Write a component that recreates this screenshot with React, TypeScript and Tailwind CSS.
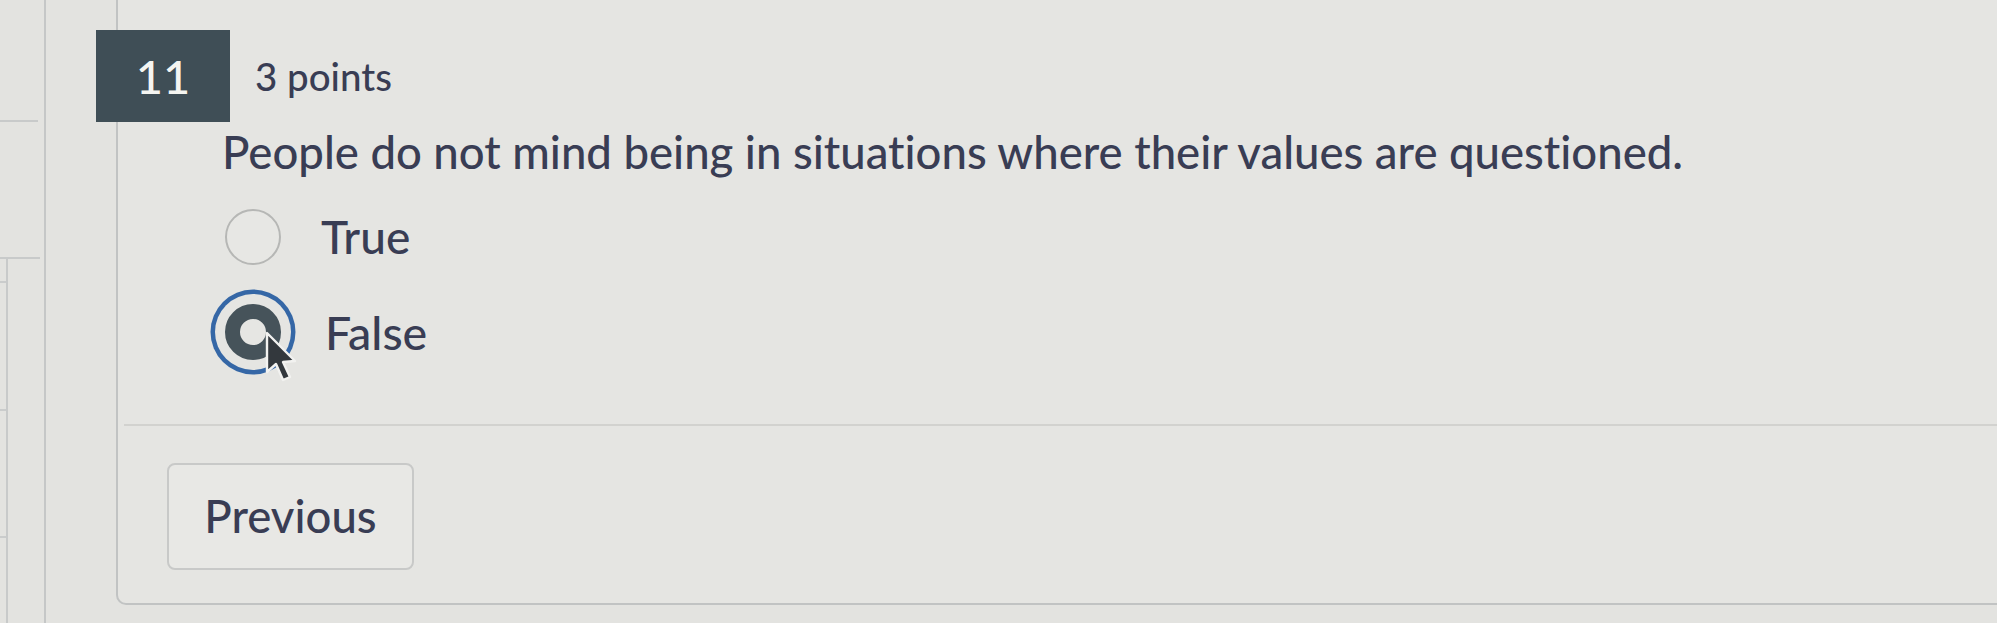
function Radio({ checked }: { checked?: boolean }) {
  if (checked) {
    return (
      <div className="relative w-[56px] h-[56px] shrink-0">
        <div className="w-[56px] h-[56px] rounded-full border-[15px] border-[#46535a] bg-[#e6e6e3] shadow-[0_0_0_10px_#e5e5e2,0_0_0_14.5px_#3567a6]" />
        <svg
          className="absolute left-[40px] top-[27px]"
          width="34"
          height="52"
          viewBox="0 0 34 52"
        >
          <path
            d="M2 2 L2 41 L11 33 L18 49 L25 46 L18 31 L30 30 Z"
            fill="#33383d"
            stroke="#f2f2f0"
            strokeWidth="2.4"
            strokeLinejoin="round"
          />
        </svg>
      </div>
    )
  }
  return <div className="w-[56px] h-[56px] shrink-0 rounded-full border-2 border-[#b6b7b5] bg-[#e7e7e4]" />
}

export default function App() {
  return (
    <div
      className="flex w-full h-[623px] overflow-hidden bg-[#e3e3e0] text-[#393d54] [font-variant-ligatures:none]"
      style={{ fontFamily: 'Lato, "Open Sans", sans-serif' }}
    >
      {/* left nav strip */}
      <div className="w-[46px] shrink-0 flex flex-col border-r-2 border-[#c5c7c7]">
        <div className="h-[122px] mr-[6px] border-b-2 border-[#c8caca]" />
        <div className="h-[137px] mr-[4px] border-b-2 border-[#c8caca]" />
        <div className="flex-1 flex">
          <div className="w-[6px] flex flex-col">
            <div className="h-[24px] border-b-2 border-[#cacccc]" />
            <div className="h-[128px] border-b-2 border-[#cacccc]" />
            <div className="h-[127px] border-b-2 border-[#cacccc]" />
          </div>
          <div className="flex-1 border-l-2 border-[#c8caca]" />
        </div>
      </div>

      <div className="w-[70px] shrink-0" />

      {/* question card */}
      <div className="flex-1 h-[605px] border-l-2 border-b-2 border-[#c1c3c3] rounded-bl-[10px] bg-[#e5e5e2] flex flex-col pt-[30px]">
        <div className="flex items-center -ml-[22px]">
          <div className="w-[134px] h-[92px] bg-[#3f4e56] text-[#f5f5f1] text-[47px] font-medium leading-none flex items-center justify-center">
            11
          </div>
          <div className="ml-[25px] text-[38.5px] font-medium leading-none">3 points</div>
        </div>

        <div className="mt-[4px] pl-[104px] text-[45.5px] font-medium leading-[52px]">
          People do not mind being in situations where their values are questioned.
        </div>

        <div className="mt-[31px] pl-[107px] flex flex-col gap-[39px]">
          <label className="flex items-center gap-[40px]">
            <Radio />
            <span className="text-[46px] font-medium leading-none">True</span>
          </label>
          <label className="flex items-center gap-[44px]">
            <Radio checked />
            <span className="text-[46.5px] font-medium leading-none">False</span>
          </label>
        </div>

        <div className="mt-[64px] ml-[6px] border-t-2 border-[#d2d2cf]" />

        <div className="mt-[37px] ml-[49px]">
          <button className="w-[247px] h-[107px] rounded-[8px] border-2 border-[#c8c9c8] bg-[#e8e8e5] text-[45.5px] font-medium text-[#393d54]">
            Previous
          </button>
        </div>
      </div>
    </div>
  )
}
